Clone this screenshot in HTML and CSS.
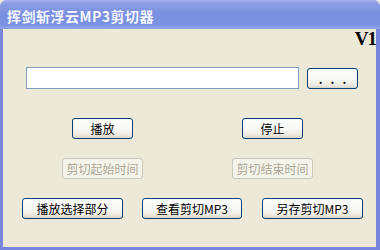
FILE: index.html
```html
<!DOCTYPE html>
<html lang="zh-CN">
<head>
    <meta charset="UTF-8">
    <title>挥剑斩浮云MP3剪切器</title>
    <link rel="stylesheet" href="styles.css">
</head>
<body>

    <div class="window">
        <div class="titlebar">挥剑斩浮云MP3剪切器</div>

        <div class="client">
            <div class="version">V1</div>

            <div class="row row-file">
                <input type="text" class="file-input">
                <button class="btn btn-browse">...</button>
            </div>

            <div class="row row-play">
                <button class="btn btn-small">播放</button>
                <button class="btn btn-small">停止</button>
            </div>

            <div class="row row-mark">
                <button class="btn btn-mark" disabled>剪切起始时间</button>
                <button class="btn btn-mark" disabled>剪切结束时间</button>
            </div>

            <div class="row row-actions">
                <button class="btn btn-wide">播放选择部分</button>
                <button class="btn btn-wide btn-mid">查看剪切MP3</button>
                <button class="btn btn-wide">另存剪切MP3</button>
            </div>
        </div>
    </div>

</body>
</html>
```

FILE: styles.css
```css
/* Окно в стиле XP */
body {
    margin: 0;
    padding: 0;
    font-family: 'Noto Sans CJK SC', 'DejaVu Sans', sans-serif;
    font-size: 12px;
    background-color: #ece9d8;
}

.window {
    width: 380px;
    height: 250px;
    display: flex;
    flex-direction: column;
    background-color: #7a86dc;
    border-radius: 7px 7px 0 0;
    overflow: hidden;
}

.titlebar {
    height: 29px;
    box-sizing: border-box;
    padding: 2px 0 0 7px;
    display: flex;
    align-items: center;
    color: #f4f6ff;
    font-size: 14px;
    font-weight: bold;
    letter-spacing: 0.5px;
    background: linear-gradient(to bottom, #a4b2f0 0, #8b9ee6 3px, #7b90e0 45%, #7a92e2 85%, #8fa7ec 100%);
}

.client {
    flex: 1;
    margin: 0 4px 3px 3px;
    background-color: #ece9d8;
}

.version {
    height: 20px;
    line-height: 20px;
    text-align: right;
    font-family: 'Liberation Serif', serif;
    font-weight: bold;
    font-size: 19px;
    letter-spacing: -1px;
    padding-right: 0;
    color: #000;
}

.row {
    display: flex;
    align-items: center;
}

.row-file {
    margin-top: 18px;
    padding-left: 23px;
    gap: 8px;
}

.file-input {
    width: 273px;
    height: 22px;
    box-sizing: border-box;
    border: 1px solid #7f9db9;
    background: #fff;
    margin: 0;
    padding: 0 3px;
    outline: none;
}

.btn {
    height: 21px;
    box-sizing: border-box;
    margin: 0;
    padding: 0;
    border: 1px solid #003c74;
    border-radius: 3px;
    background: linear-gradient(to bottom, #ffffff 0, #f7f7f3 55%, #ebe9e0 85%, #d8d4c8 100%);
    font-family: 'Noto Sans CJK SC', 'DejaVu Sans', sans-serif;
    font-size: 12px;
    line-height: 19px;
    color: #000;
}

.btn-browse {
    width: 51px;
    font-weight: bold;
    letter-spacing: 8px;
    padding-left: 8px;
}

.row-play {
    margin-top: 29px;
    padding-left: 69px;
    gap: 109px;
}

.btn-small {
    width: 61px;
}

.row-mark {
    margin-top: 19px;
    padding-left: 59px;
    gap: 89px;
}

.btn-mark {
    width: 81px;
}

.btn-mark:disabled {
    border-color: #c9c7ba;
    background: #f5f4ea;
    color: #aca899;
}

.row-actions {
    margin-top: 19px;
    padding-left: 19px;
    gap: 19px;
}

.btn-wide {
    width: 101px;
}

.btn-mid {
    width: 100px;
    margin-right: 1px;
}
```
